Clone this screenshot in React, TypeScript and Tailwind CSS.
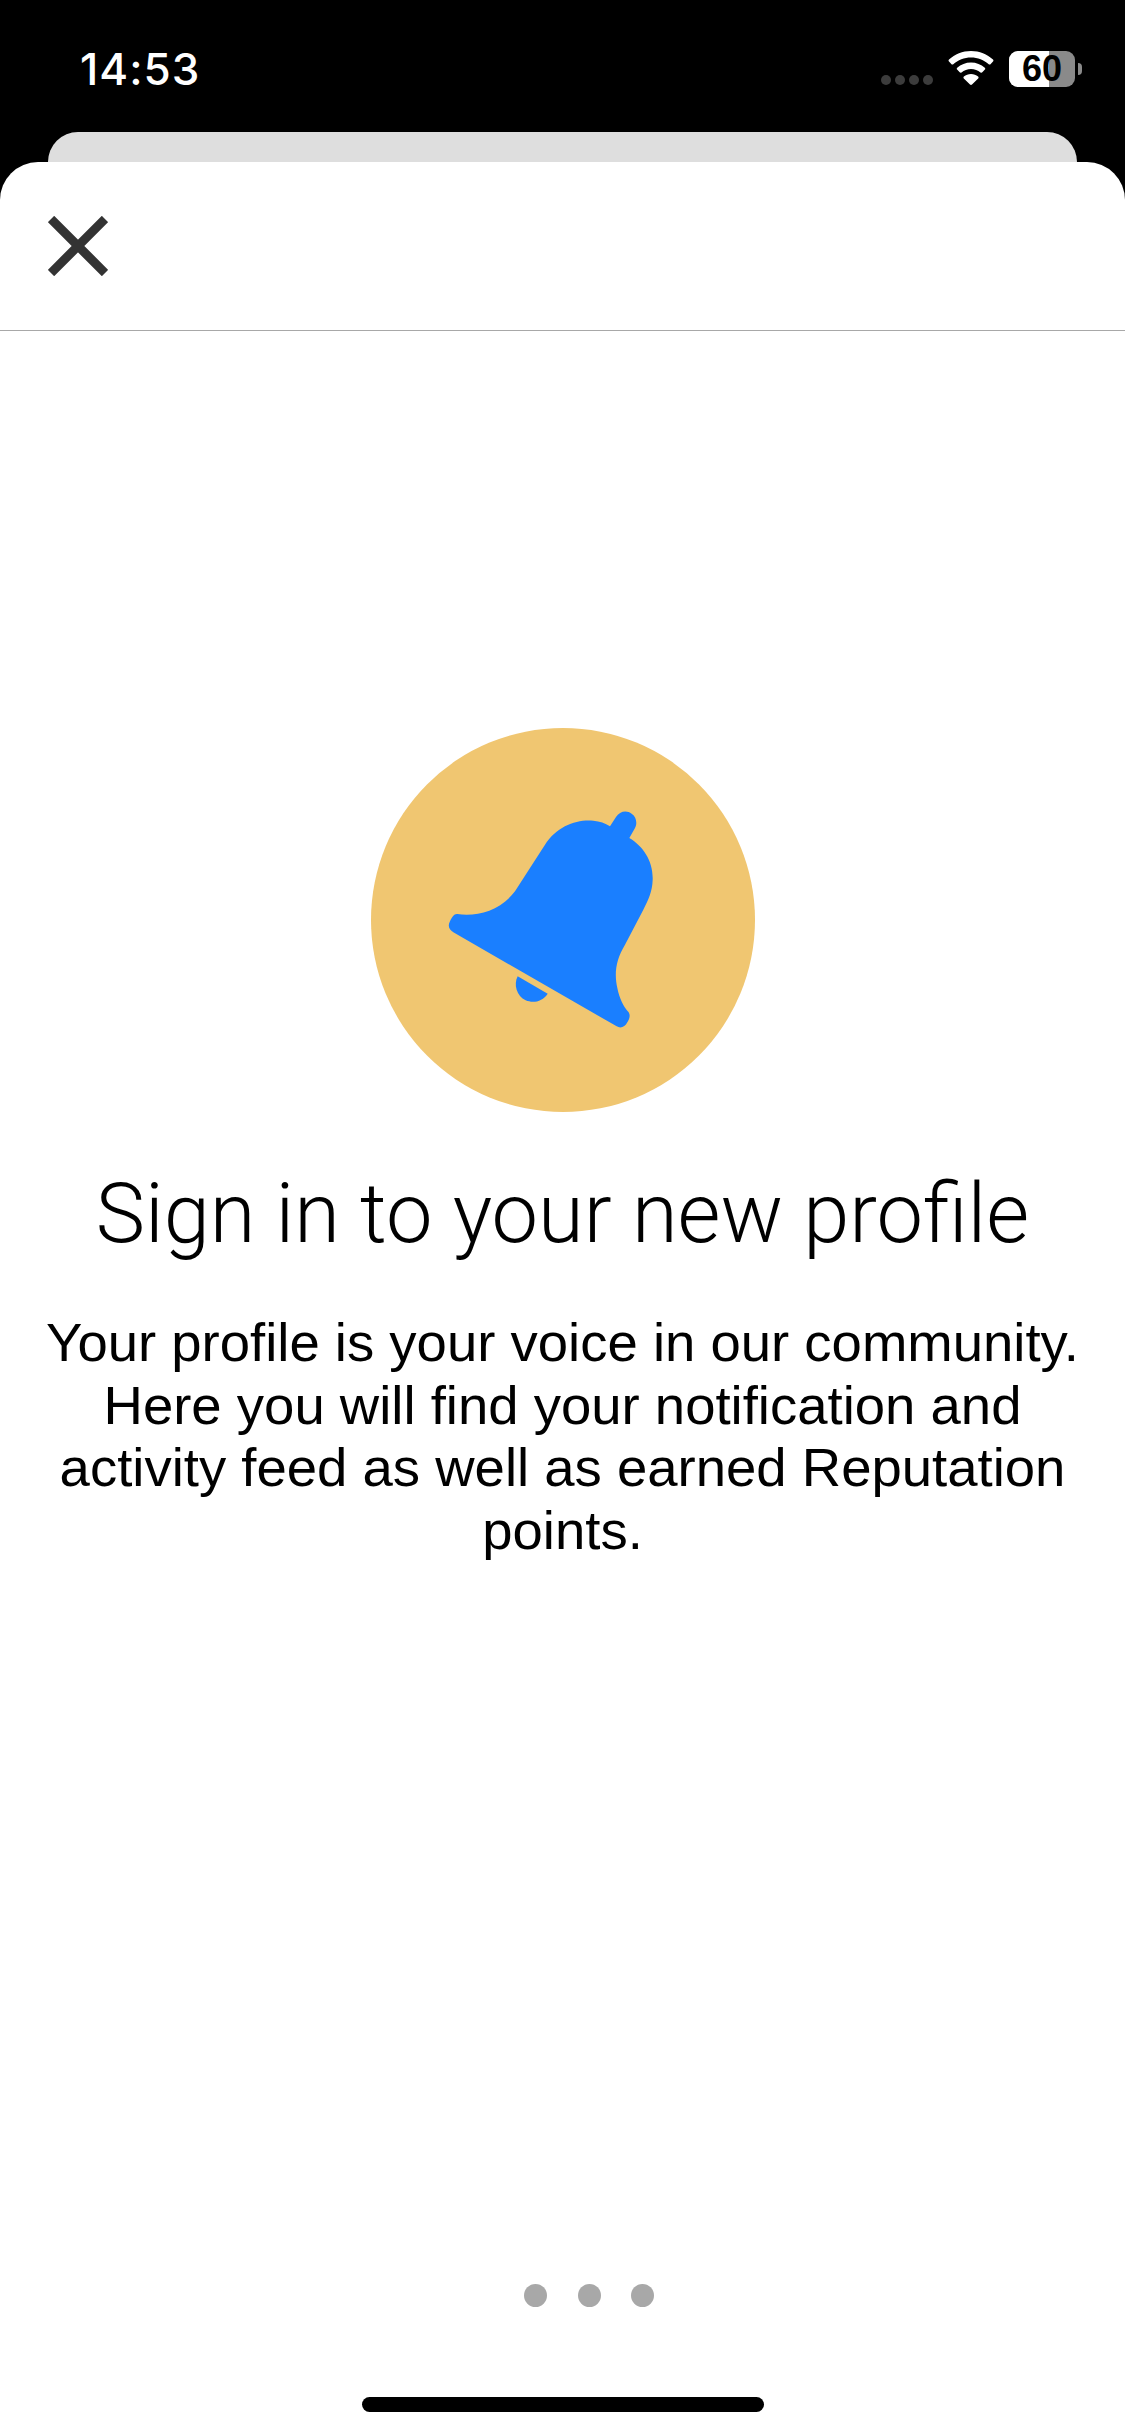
const Wifi = () => (
  <svg width="46" height="34" viewBox="0 0 46 34" className="shrink-0">
    <path fill="#fff" d="M23 0C14.500 0 6.800 3.300 1 8.600c-.6.500-.6 1.300 0 1.900l2.500 2.700c.5.500 1.300.5 1.800 0C10 9 16.200 6.400 23 6.400S36 9 40.700 13.200c.5.500 1.300.5 1.800 0l2.500-2.700c.6-.6.600-1.400 0-1.900C39.200 3.300 31.500 0 23 0z" />
    <path fill="#fff" d="M23 11.500c-5.300 0-10.100 2-13.800 5.300-.6.500-.6 1.300-.1 1.800l2.600 2.700c.5.500 1.200.5 1.800.1 2.600-2.200 5.900-3.500 9.500-3.500s6.900 1.300 9.500 3.500c.6.400 1.300.4 1.800-.1l2.600-2.700c.5-.5.500-1.300-.1-1.800-3.700-3.300-8.500-5.300-13.800-5.300z" />
    <path fill="#fff" d="M23 23c-2.700 0-5.200 1-7.100 2.600-.6.500-.6 1.300-.1 1.800l6.200 6.200c.5.500 1.500.5 2 0l6.200-6.200c.5-.5.500-1.300-.1-1.800C28.200 24 25.700 23 23 23z" />
  </svg>
);

const Bell = () => (
  <svg width="384" height="384" viewBox="33 55 1152 1152" className="shrink-0">
    <circle cx="609" cy="631" r="576" fill="#f0c671" />
    <path
      fill="#1a7fff"
      d="M292 613C350 621 420 605 465 545L555 405C590 350 650 328 700 333C720 335 735 340 750 350L768 322C778 305 800 300 815 312C830 322 832 342 825 355L808 385C850 410 880 455 878 510C877 545 865 570 850 600L795 705C768 750 762 790 772 835C778 865 790 890 806 908C812 918 808 928 802 938C795 952 782 957 770 950L280 668C268 660 262 650 270 635C276 622 282 612 292 613Z"
    />
    <path fill="#1a7fff" d="M473 800L563 852C548 875 520 882 497 872C470 860 460 825 473 800Z" />
  </svg>
);

const App = () => {
  return (
    <div className="h-[2436px] w-[1125px] flex flex-col bg-black overflow-hidden font-['Liberation_Sans',sans-serif]">

      {/* STATUS BAR */}
      <div className="h-[132px] flex items-start justify-between pl-[80px] pr-[43px] pt-[44px]">
        <span className="font-['Inter',sans-serif] font-medium tracking-[1px] text-[44px] leading-[50px] text-white">
          14:53
        </span>
        <div className="flex items-start pt-[7px]">
          <div className="flex gap-[4px] mt-[24px] mr-[15px]">
            <span className="size-[10px] rounded-full bg-[#3c3c3c]" />
            <span className="size-[10px] rounded-full bg-[#3c3c3c]" />
            <span className="size-[10px] rounded-full bg-[#3c3c3c]" />
            <span className="size-[10px] rounded-full bg-[#3c3c3c]" />
          </div>
          <Wifi />
          <div className="relative ml-[15px] w-[66px] h-[36px] rounded-[9px] bg-[#8a8a8a] flex items-center justify-center">
            <div className="absolute inset-y-0 left-0 w-[40px] rounded-l-[9px] bg-white" />
            <span className="relative text-[36px] font-bold leading-none text-black font-['Liberation_Sans',sans-serif]">60</span>
          </div>
          <div className="w-[4px] h-[12px] mt-[12px] ml-[3px] rounded-r-full bg-[#8a8a8a]" />
        </div>
      </div>

      {/* SHEET BEHIND */}
      <div className="h-[30px] mx-[48px] rounded-t-[36px] bg-[#dedede]" />

      {/* SHEET */}
      <div className="flex-1 flex flex-col rounded-t-[38px] bg-white">
        <header className="h-[169px] flex items-start px-[48px] pt-[54px] border-b border-[#a8a8a8]">
          <svg width="60" height="60" viewBox="0 0 60 60">
            <path d="M3 3L57 57M57 3L3 57" stroke="#333" strokeWidth="9" />
          </svg>
        </header>

        <main className="flex-1 flex flex-col items-center pt-[397px]">
          <Bell />
          <h1 className="mt-[52px] font-['Roboto',sans-serif] font-light text-[83px] leading-[100px] text-black whitespace-nowrap">
            Sign in to your new profile
          </h1>
          <p className="mt-[48px] w-[1080px] text-center text-[54.500px] leading-[62.700px] text-black">
            Your profile is your voice in our community.
            <br />
            Here you will find your notification and
            <br />
            activity feed as well as earned Reputation
            <br />
            points.
          </p>
        </main>

        {/* PAGER */}
        <div className="flex gap-[30.500px] pl-[524px]">
          <span className="size-[23px] rounded-full bg-[#a8a8a8]" />
          <span className="size-[23px] rounded-full bg-[#a8a8a8]" />
          <span className="size-[23px] rounded-full bg-[#a8a8a8]" />
        </div>

        {/* HOME INDICATOR */}
        <div className="mt-[90px] mb-[24px] mx-auto w-[402px] h-[15px] rounded-full bg-black" />
      </div>
    </div>
  );
};

export default App;
